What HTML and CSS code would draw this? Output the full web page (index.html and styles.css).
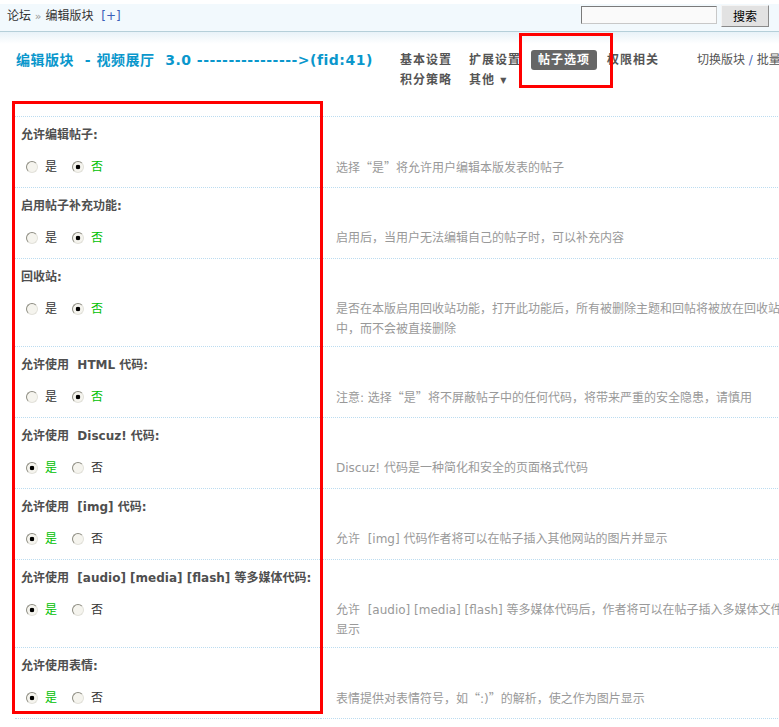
FILE: index.html
```html
<!DOCTYPE html>
<html lang="zh-CN">
<head>
<meta charset="utf-8">
<title>编辑版块</title>
<link rel="stylesheet" href="styles.css">
</head>
<body>
<div class="topbar">
  <div class="crumb">论坛 <span class="raquo">»</span> 编辑版块 <a class="plus" href="#">[+]</a></div>
  <form class="search">
    <input class="search-txt" type="text">
    <button class="search-btn" type="button">搜索</button>
  </form>
</div>
<div class="shade"></div>

<div class="itemtitle">
  <h3 class="title">编辑版块&nbsp; - 视频展厅&nbsp; 3.0 ---------------->(fid:41)</h3>
  <ul class="tabs">
    <li><a href="#">基本设置</a></li>
    <li><a href="#">扩展设置</a></li>
    <li class="current"><a href="#">帖子选项</a></li>
    <li><a href="#">权限相关</a></li>
    <li><a href="#">积分策略</a></li>
    <li><a href="#">其他 <span class="arrow">▼</span></a></li>
  </ul>
  <div class="switch">切换版块 <span class="sep">/</span> 批量编辑</div>
</div>

<table class="tb">
  <colgroup><col class="col-form"><col class="col-tips"></colgroup>
  <tr><td colspan="2" class="label">允许编辑帖子:</td></tr>
  <tr>
    <td class="rowform"><ul class="radios"><li><input class="radio" type="radio" name="r1"> 是</li><li class="checked"><input class="radio" type="radio" name="r1" checked> 否</li></ul></td>
    <td class="tips">选择<span class="cjk">“是”</span>将允许用户编辑本版发表的帖子</td>
  </tr>
  <tr><td colspan="2" class="label">启用帖子补充功能:</td></tr>
  <tr>
    <td class="rowform"><ul class="radios"><li><input class="radio" type="radio" name="r2"> 是</li><li class="checked"><input class="radio" type="radio" name="r2" checked> 否</li></ul></td>
    <td class="tips">启用后，当用户无法编辑自己的帖子时，可以补充内容</td>
  </tr>
  <tr><td colspan="2" class="label">回收站:</td></tr>
  <tr>
    <td class="rowform"><ul class="radios"><li><input class="radio" type="radio" name="r3"> 是</li><li class="checked"><input class="radio" type="radio" name="r3" checked> 否</li></ul></td>
    <td class="tips">是否在本版启用回收站功能，打开此功能后，所有被删除主题和回帖将被放在回收站中，而不会被直接删除</td>
  </tr>
  <tr><td colspan="2" class="label">允许使用&nbsp; HTML 代码:</td></tr>
  <tr>
    <td class="rowform"><ul class="radios"><li><input class="radio" type="radio" name="r4"> 是</li><li class="checked"><input class="radio" type="radio" name="r4" checked> 否</li></ul></td>
    <td class="tips">注意: 选择<span class="cjk">“是”</span>将不屏蔽帖子中的任何代码，将带来严重的安全隐患，请慎用</td>
  </tr>
  <tr><td colspan="2" class="label">允许使用&nbsp; Discuz! 代码:</td></tr>
  <tr>
    <td class="rowform"><ul class="radios"><li class="checked"><input class="radio" type="radio" name="r5" checked> 是</li><li><input class="radio" type="radio" name="r5"> 否</li></ul></td>
    <td class="tips">Discuz! 代码是一种简化和安全的页面格式代码</td>
  </tr>
  <tr><td colspan="2" class="label">允许使用&nbsp; [img] 代码:</td></tr>
  <tr>
    <td class="rowform"><ul class="radios"><li class="checked"><input class="radio" type="radio" name="r6" checked> 是</li><li><input class="radio" type="radio" name="r6"> 否</li></ul></td>
    <td class="tips">允许&nbsp; [img] 代码作者将可以在帖子插入其他网站的图片并显示</td>
  </tr>
  <tr><td colspan="2" class="label">允许使用&nbsp; [audio] [media] [flash] 等多媒体代码:</td></tr>
  <tr>
    <td class="rowform"><ul class="radios"><li class="checked"><input class="radio" type="radio" name="r7" checked> 是</li><li><input class="radio" type="radio" name="r7"> 否</li></ul></td>
    <td class="tips">允许&nbsp; [audio] [media] [flash] 等多媒体代码后，作者将可以在帖子插入多媒体文件并显示</td>
  </tr>
  <tr><td colspan="2" class="label">允许使用表情:</td></tr>
  <tr class="last">
    <td class="rowform"><ul class="radios"><li class="checked"><input class="radio" type="radio" name="r8" checked> 是</li><li><input class="radio" type="radio" name="r8"> 否</li></ul></td>
    <td class="tips">表情提供对表情符号，如<span class="cjk">“</span>:)<span class="cjk">”</span>的解析，使之作为图片显示</td>
  </tr>
</table>

<div class="mark mark-tab"></div>
<div class="mark mark-form"></div>
</body>
</html>
```
FILE: styles.css
```css
html, body {
  margin: 0;
  padding: 0;
  overflow: hidden;
  background: #fff;
}
body {
  position: relative;
  font: 12px/20px "DejaVu Sans", "Noto Sans CJK SC", sans-serif;
  color: #333;
}
a { text-decoration: none; }
.cjk { font-family: "Noto Sans CJK SC", sans-serif; }

/* top bar */
.topbar {
  margin-top: 4px;
  height: 27px;
  background: #f2f9fd;
  border-bottom: 1px solid #b5cfd9;
  display: flex;
  justify-content: space-between;
  align-items: flex-start;
}
.crumb {
  padding: 2px 0 0 7px;
  line-height: 20px;
  color: #333;
}
.raquo { color: #999; font-size: 11px; }
.plus { color: #3a5fb8; margin-left: 4px; }
.search {
  display: flex;
  align-items: flex-start;
  margin: 0 10px 0 0;
}
.search-txt {
  box-sizing: border-box;
  width: 136px;
  height: 18px;
  margin: 2px 0 0 0;
  padding: 0 2px;
  background: #fafafa;
  border: 1px solid #c8c8c8;
  border-top-color: #7a7a7a;
  border-left-color: #7a7a7a;
}
.search-btn {
  box-sizing: border-box;
  width: 48px;
  height: 22px;
  margin: 1px 0 0 4px;
  padding: 0;
  font: 12px/18px "Noto Sans CJK SC", sans-serif;
  color: #000;
  background: #e2e2e2;
  border: 1px solid #8a8a8a;
  border-top-color: #f4f4f4;
  border-left-color: #f4f4f4;
}
.shade {
  height: 12px;
  background: linear-gradient(#e8f2f8, #fff);
}

/* title + tabs */
.itemtitle {
  display: flex;
  align-items: flex-start;
  padding: 6px 0 0 16px;
  height: 40px;
}
.title {
  flex: 0 0 377px;
  margin: 0;
  font-size: 14px;
  line-height: 20px;
  font-weight: bold;
  letter-spacing: 0.5px;
  color: #0a97cc;
  white-space: nowrap;
}
.tabs {
  flex: 0 0 276px;
  display: flex;
  flex-wrap: wrap;
  gap: 0 3px;
  margin: 0;
  padding: 0;
  list-style: none;
}
.tabs a {
  display: block;
  box-sizing: border-box;
  width: 66px;
  padding: 0 0 0 7px;
  line-height: 20px;
  font-weight: bold;
  letter-spacing: 1px;
  color: #555;
  border-radius: 3px;
  white-space: nowrap;
}
.tabs .current a {
  background: #666;
  color: #fff;
}
.arrow {
  font-size: 8px;
  letter-spacing: 0;
  vertical-align: 1px;
}
.switch {
  margin-left: 28px;
  line-height: 20px;
  color: #555;
  white-space: nowrap;
}
.sep { color: #4a6cc0; }

/* settings table */
.tb {
  margin: 26px 0 0 15px;
  width: 785px;
  table-layout: fixed;
  border-collapse: separate;
  border-spacing: 0;
}
.col-form { width: 306px; }
.col-tips { width: 479px; }
.tb td { line-height: 20px; }
.label {
  border-top: 1px dotted #bcdcf0;
  padding: 8px 0 6px 6px;
  font-weight: bold;
  color: #4f4f4f;
  white-space: nowrap;
}
.rowform {
  padding: 6px 0 10px 0;
  vertical-align: top;
}
.tips {
  padding: 6px 2px 7px 15px;
  vertical-align: top;
  color: #999;
}
.last td { border-bottom: 1px dotted #bcdcf0; }

.radios {
  display: flex;
  align-items: center;
  height: 20px;
  margin: 0;
  padding: 0 0 0 11px;
  list-style: none;
}
.radios li {
  display: flex;
  align-items: center;
  margin-right: 15px;
  color: #333;
  white-space: nowrap;
}
.radios li.checked { color: #00c000; }
.radio {
  appearance: none;
  -webkit-appearance: none;
  box-sizing: border-box;
  width: 12px;
  height: 12px;
  margin: 0 7px 0 0;
  border-radius: 50%;
  border: 1px solid #e2e1da;
  border-top-color: #8d8c82;
  border-left-color: #8d8c82;
  background: #f5f4ee;
}
.radio:checked {
  background: radial-gradient(circle, #000 0 2px, #f5f4ee 2.6px);
}

/* annotation boxes */
.mark {
  position: absolute;
  box-sizing: border-box;
  border: 3px solid #f00;
  pointer-events: none;
}
.mark-tab { left: 519px; top: 33px; width: 94px; height: 55px; }
.mark-form { left: 12px; top: 101px; width: 311px; height: 613px; }
```
